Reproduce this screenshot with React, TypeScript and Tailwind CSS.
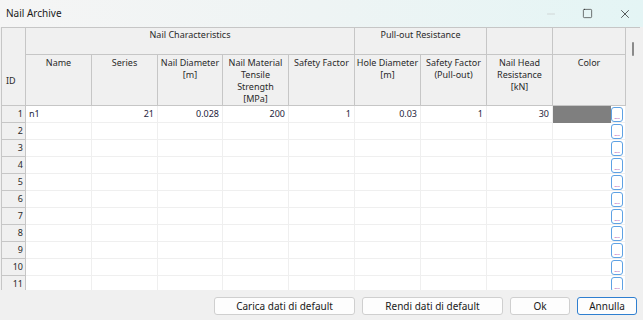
import { Minus, Square, X } from "lucide-react";

const cols = [24, 66, 66, 65, 66, 66, 66, 66, 66, 73];

type Row = {
  id: number;
  name?: string;
  series?: string;
  diam?: string;
  tensile?: string;
  sf?: string;
  hole?: string;
  sfPull?: string;
  head?: string;
  color?: boolean;
};

const rows: Row[] = [
  {
    id: 1,
    name: "n1",
    series: "21",
    diam: "0.028",
    tensile: "200",
    sf: "1",
    hole: "0.03",
    sfPull: "1",
    head: "30",
    color: true,
  },
  ...Array.from({ length: 10 }, (_, i) => ({ id: i + 2 })),
];

function DotsButton() {
  return (
    <div className="flex h-[15px] w-[12px] items-end justify-center rounded-[3px] border-[1.5px] border-[#5ea2e4] bg-white pb-[1px] text-[7px] leading-none text-[#b050b0]">
      ...
    </div>
  );
}

function HeadCell({ children, className = "" }: { children?: React.ReactNode; className?: string }) {
  return (
    <div
      className={
        "border-r border-b border-[#c6c6c6] bg-[#f0f0f0] text-center leading-[12px] text-[#2a2a2a] " +
        className
      }
    >
      {children}
    </div>
  );
}

function DataCell({ children, left }: { children?: React.ReactNode; left?: boolean }) {
  return (
    <div
      className={
        "h-[17px] border-r border-b border-[#efefef] bg-white px-[3px] leading-[16px] text-[#1e1e3c] " +
        (left ? "text-left" : "text-right")
      }
    >
      {children}
    </div>
  );
}

function Btn({ label, w, primary }: { label: string; w: string; primary?: boolean }) {
  return (
    <button
      className={
        "h-[18px] rounded-[3px] border bg-[#fdfdfd] text-[10px] leading-none text-[#1a1a1a] " +
        w +
        (primary ? " border-[#2f7fd0]" : " border-[#cfcfcf]")
      }
    >
      {label}
    </button>
  );
}

export default function App() {
  return (
    <div
      className="flex h-[320px] w-[643px] flex-col overflow-hidden bg-[#f0f0f0] text-[9px]"
      style={{ fontFamily: '"Noto Sans", "Open Sans", sans-serif' }}
    >
      {/* title bar */}
      <div className="flex h-[27px] shrink-0 items-center bg-gradient-to-r from-[#f5f5f5] via-[#eef4f4] to-[#e4f5f5] pl-[6px]">
        <span className="text-[10px] text-[#1a1a1a]">Nail Archive</span>
        <div className="ml-auto flex items-center">
          <div className="flex w-[37px] justify-center text-[#b8b8b8]">
            <Minus size={12} strokeWidth={1} />
          </div>
          <div className="flex w-[37px] justify-center text-[#1a1a1a]">
            <Square size={11} strokeWidth={1.3} />
          </div>
          <div className="flex w-[37px] justify-center text-[#1a1a1a]">
            <X size={14} strokeWidth={1.2} />
          </div>
        </div>
      </div>

      {/* grid area */}
      <div className="flex h-[263px] shrink-0 overflow-hidden pl-[1px]">
        <div className="h-full overflow-hidden border-t border-l border-[#c6c6c6] bg-white">
          <div
            className="grid"
            style={{ gridTemplateColumns: cols.map((c) => c + "px").join(" ") }}
          >
            {/* header row 1 */}
            <HeadCell className="row-span-2 pt-[47px] pl-[4px] text-left">ID</HeadCell>
            <HeadCell className="col-span-5 h-[27px] pt-[1px]">Nail Characteristics</HeadCell>
            <HeadCell className="col-span-2 h-[27px] pt-[1px]">Pull-out Resistance</HeadCell>
            <HeadCell className="h-[27px]" />
            <HeadCell className="h-[27px]" />
            {/* header row 2 */}
            <HeadCell className="h-[51px] pt-[2px]">Name</HeadCell>
            <HeadCell className="h-[51px] pt-[2px]">Series</HeadCell>
            <HeadCell className="h-[51px] whitespace-nowrap pt-[2px]">
              Nail Diameter
              <br />
              [m]
            </HeadCell>
            <HeadCell className="h-[51px] px-[4px] pt-[2px]">
              Nail Material Tensile Strength [MPa]
            </HeadCell>
            <HeadCell className="h-[51px] whitespace-nowrap pt-[2px]">Safety Factor</HeadCell>
            <HeadCell className="h-[51px] whitespace-nowrap pt-[2px]">
              Hole Diameter
              <br />
              [m]
            </HeadCell>
            <HeadCell className="h-[51px] whitespace-nowrap pt-[2px]">
              Safety Factor
              <br />
              (Pull-out)
            </HeadCell>
            <HeadCell className="h-[51px] px-[6px] pt-[2px]">
              Nail Head Resistance [kN]
            </HeadCell>
            <HeadCell className="h-[51px] pt-[2px]">Color</HeadCell>

            {rows.map((r) => (
              <div key={r.id} className="contents">
                <div className="h-[17px] border-r border-b border-[#c6c6c6] bg-[#f0f0f0] pr-[2px] text-right leading-[16px] text-[#2a2a2a]">
                  {r.id}
                </div>
                <DataCell left>{r.name}</DataCell>
                <DataCell>{r.series}</DataCell>
                <DataCell>{r.diam}</DataCell>
                <DataCell>{r.tensile}</DataCell>
                <DataCell>{r.sf}</DataCell>
                <DataCell>{r.hole}</DataCell>
                <DataCell>{r.sfPull}</DataCell>
                <DataCell>{r.head}</DataCell>
                <div className="flex h-[17px] items-center border-r border-b border-[#efefef] bg-white">
                  <div
                    className={
                      "h-[17px] w-[58px] " + (r.color ? "bg-[#7f7f7f]" : "")
                    }
                  />
                  <DotsButton />
                </div>
              </div>
            ))}
          </div>
        </div>
        {/* scrollbar */}
        <div className="flex w-[14px] shrink-0 justify-center border-t border-[#c6c6c6] bg-[#f0f0f0] pt-[14px]">
          <div className="h-[14px] w-[2px] rounded bg-[#8a8a8a]" />
        </div>
      </div>

      {/* footer */}
      <div className="flex flex-1 items-start justify-end gap-[7px] pt-[7px] pr-[6px]">
        <Btn label="Carica dati di default" w="w-[141px]" />
        <Btn label="Rendi dati di default" w="w-[141px]" />
        <Btn label="Ok" w="w-[60px]" />
        <Btn label="Annulla" w="w-[60px]" primary />
      </div>
    </div>
  );
}
